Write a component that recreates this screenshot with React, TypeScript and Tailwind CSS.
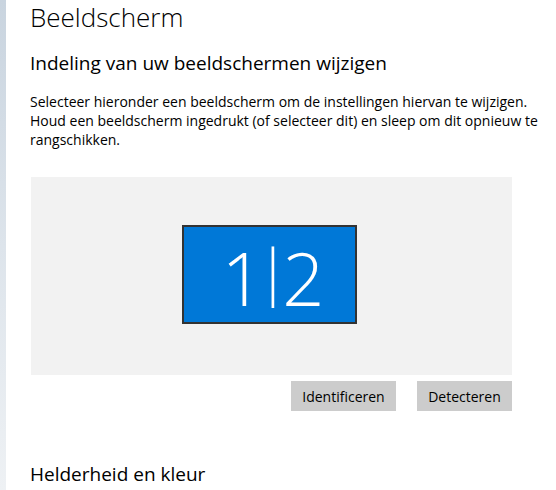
export default function App() {
  return (
    <div
      className="flex h-[490px] w-[556px] overflow-hidden bg-white text-black"
      style={{ fontFamily: '"Open Sans", "Noto Sans", sans-serif' }}
    >
      <div className="w-[6px] shrink-0 bg-gradient-to-b from-[#c9d4df] via-[#dde4eb] to-[#eef1f4]" />
      <div className="flex-1 pl-[24px]">
        <h1 className="pt-[1px] text-[26px] font-light leading-[32px]">Beeldscherm</h1>
        <h2 className="mt-[17px] text-[19px] font-normal leading-[26px]">
          Indeling van uw beeldschermen wijzigen
        </h2>
        <p className="mt-[16px] w-[512px] text-[14px] leading-[19px]">
          Selecteer hieronder een beeldscherm om de instellingen hiervan te wijzigen. Houd een
          beeldscherm ingedrukt (of selecteer dit) en sleep om dit opnieuw te rangschikken.
        </p>
        <div className="ml-[1px] mt-[28px] flex h-[198px] w-[481px] items-center justify-center bg-[#f2f2f2] pb-[3px] pr-[4px]">
          <div className="flex h-[99px] w-[175px] items-center justify-center border-2 border-[#333333] bg-[#0078d7] text-white">
            <span className="flex items-baseline pt-[6px] text-[74px] font-light leading-none tracking-[-7px]">
              <span>1</span>
              <span className="relative -top-[13px] text-[60px]">|</span>
              <span>2</span>
            </span>
          </div>
        </div>
        <div className="mt-[6px] flex w-[482px] justify-end gap-[21px]">
          <button className="h-[30px] w-[105px] bg-[#cccccc] text-[14px]">Identificeren</button>
          <button className="h-[30px] w-[95px] bg-[#cccccc] text-[14px]">Detecteren</button>
        </div>
        <h2 className="mt-[50px] text-[19px] font-normal leading-[26px]">Helderheid en kleur</h2>
      </div>
    </div>
  );
}
